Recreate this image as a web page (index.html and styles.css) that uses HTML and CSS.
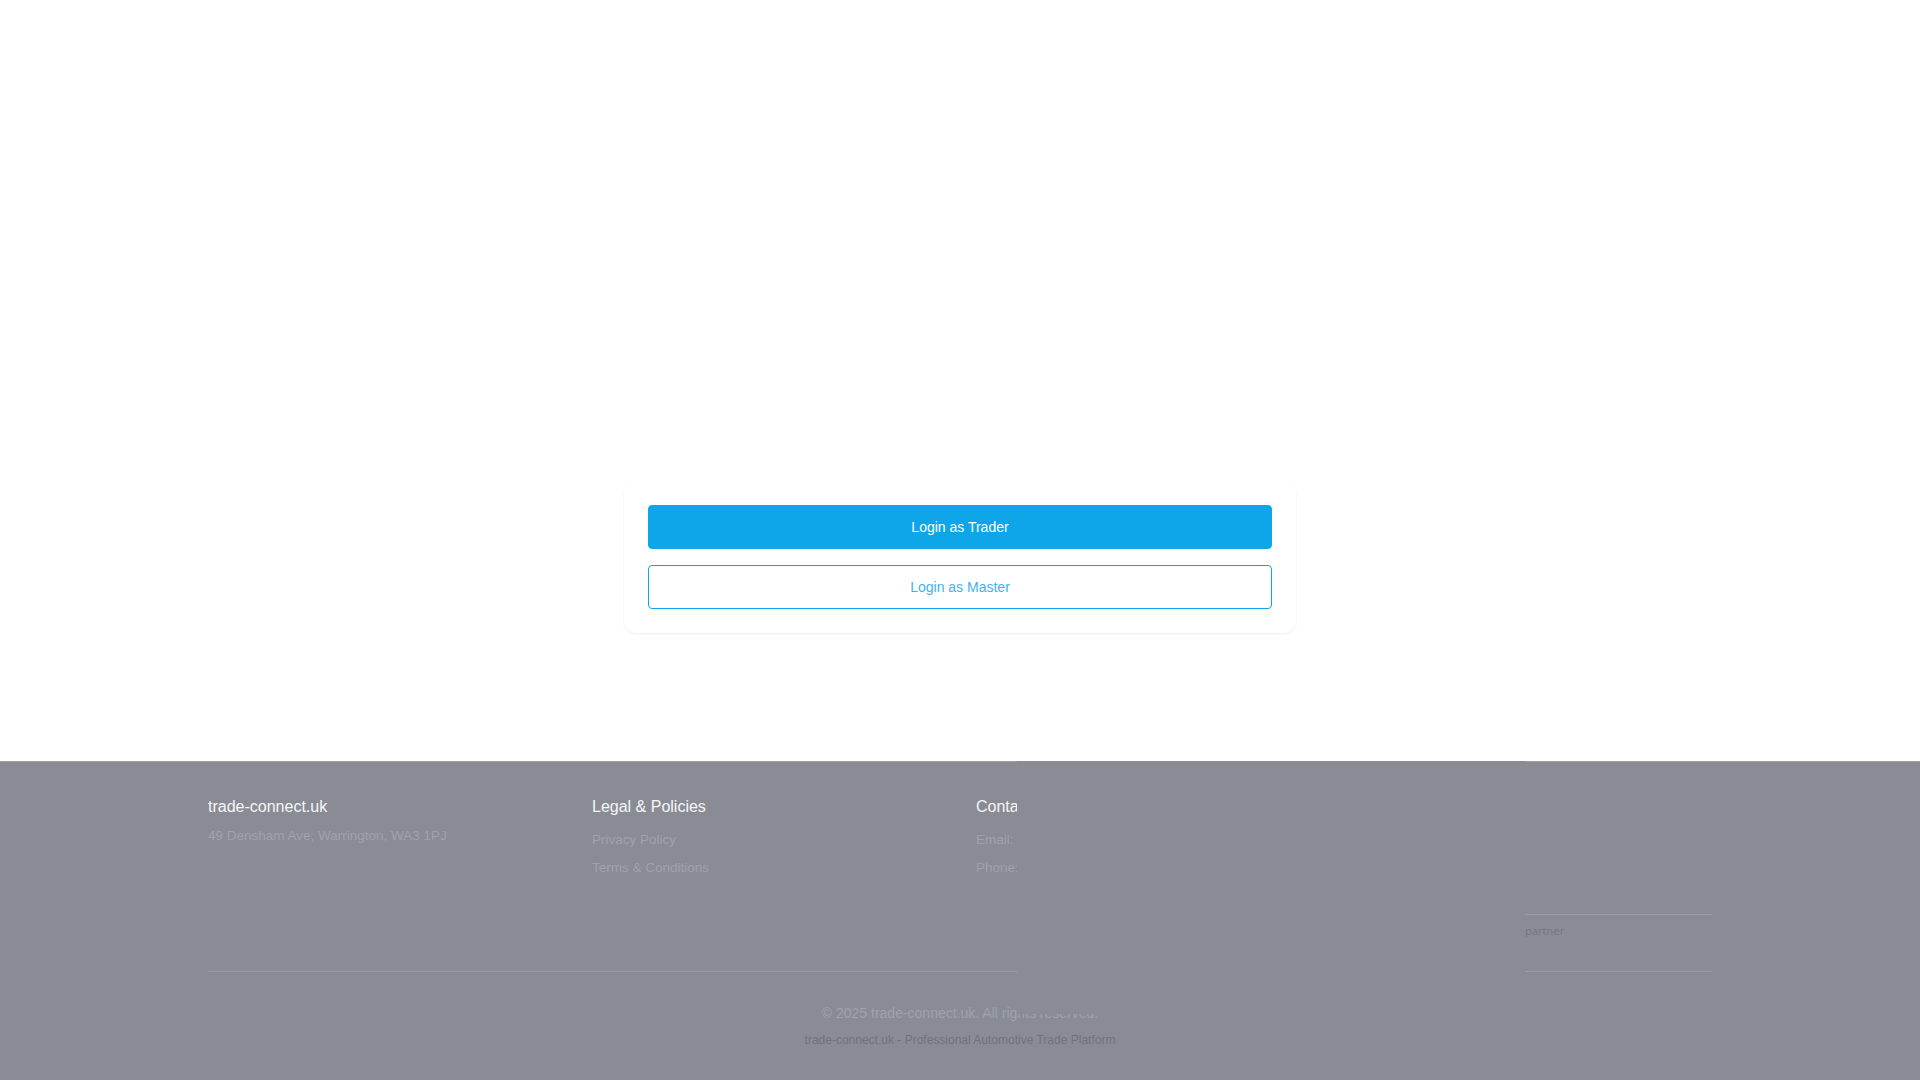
FILE: index.html
```html
<!DOCTYPE html>
<html lang="en">
<head>
<meta charset="utf-8">
<title>trade-connect.uk</title>
<link rel="stylesheet" href="styles.css">
</head>
<body>
<main class="main">
  <div class="card">
    <button class="btn btn-primary">Login as Trader</button>
    <button class="btn btn-outline">Login as Master</button>
  </div>
</main>
<footer class="footer">
  <div class="container">
    <div class="grid">
      <div class="col">
        <h3 class="col-title">trade-connect.uk</h3>
        <p class="address">49 Densham Ave, Warrington, WA3 1PJ</p>
      </div>
      <div class="col">
        <h3 class="col-title">Legal &amp; Policies</h3>
        <ul class="links">
          <li>Privacy Policy</li>
          <li>Terms &amp; Conditions</li>
        </ul>
      </div>
      <div class="col">
        <h3 class="col-title">Contact</h3>
        <ul class="links">
          <li>Email: info@trade-connect.uk</li>
          <li>Phone: 01925 000000</li>
        </ul>
      </div>
      <div class="col col-end">
        <div class="partner">partner</div>
      </div>
    </div>
    <div class="bottom">
      <p class="copy">© 2025 trade-connect.uk. All rights reserved.</p>
      <p class="tagline">trade-connect.uk - Professional Automotive Trade Platform</p>
    </div>
  </div>
  <div class="veil"></div>
</footer>
</body>
</html>
```
FILE: styles.css
```css
* { box-sizing: border-box; }
html, body { margin: 0; padding: 0; }
body {
  font-family: "Liberation Sans", Arial, sans-serif;
  background: #ffffff;
  color: #111827;
}
.main {
  height: 761px;
  display: flex;
  justify-content: center;
  align-items: flex-start;
  padding-top: 481px;
}
.card {
  width: 672px;
  background: #ffffff;
  border-radius: 12px;
  box-shadow: 0 1px 3px rgba(0,0,0,0.05), 0 1px 2px rgba(0,0,0,0.03);
  padding: 24px;
  display: flex;
  flex-direction: column;
  gap: 16px;
}
.btn {
  height: 44px;
  width: 100%;
  border-radius: 4px;
  font-family: inherit;
  font-size: 14px;
  cursor: pointer;
}
.btn-primary {
  background: #0ea5e9;
  border: 1px solid #0ea5e9;
  color: #ffffff;
}
.btn-outline {
  background: #ffffff;
  border: 1px solid #0ea5e9;
  color: #38b6f2;
}
.footer {
  position: relative;
  height: 319px;
  background: #898c95;
  border-top: 1px solid #9a9da5;
  color: #f3f4f6;
}
.container {
  width: 1536px;
  margin: 0 auto;
  padding: 0 16px;
}
.grid {
  display: grid;
  grid-template-columns: repeat(4, 1fr);
  column-gap: 32px;
  padding-top: 31px;
  height: 209px;
}
.col-title {
  margin: 0 0 5px;
  font-size: 16px;
  line-height: 28px;
  font-weight: 400;
  color: #f5f6f8;
}
.address {
  margin: 0;
  font-size: 13.5px;
  line-height: 20px;
  color: #9fa2aa;
}
.links {
  list-style: none;
  margin: 9px 0 0;
  padding: 0;
  font-size: 13.5px;
  line-height: 20px;
  color: #9fa2aa;
}
.links li { margin-bottom: 8px; }
.col-end {
  display: flex;
  justify-content: flex-end;
  align-items: flex-end;
}
.partner {
  width: 187px;
  height: 57px;
  border-top: 1px solid #9a9da5;
  padding-top: 8px;
  font-family: "DejaVu Sans", sans-serif;
  font-size: 10.5px;
  line-height: 16px;
  color: #767983;
}
.bottom {
  border-top: 1px solid #9a9da5;
  padding-top: 31px;
  text-align: center;
}
.copy {
  margin: 0;
  font-size: 14px;
  line-height: 20px;
  color: #9fa2aa;
}
.tagline {
  margin: 9px 0 0;
  font-size: 12px;
  line-height: 16px;
  color: #6f7380;
}
.veil {
  position: absolute;
  left: 1017px;
  top: -1px;
  width: 508px;
  height: 253px;
  background: #898c95;
}
```
